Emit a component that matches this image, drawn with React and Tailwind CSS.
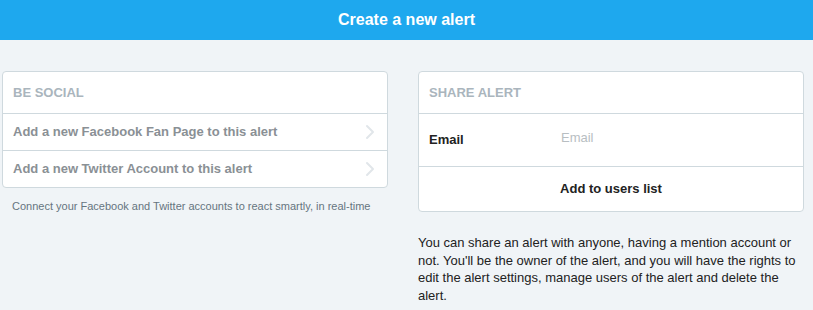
export default function App() {
  const font = { fontFamily: '"Liberation Sans", Arial, sans-serif' };
  return (
    <div className="min-h-[310px] w-full bg-[#f0f4f7]" style={font}>
      <div className="flex h-[40px] items-center justify-center bg-[#1ea8ee]">
        <h1 className="text-[16px] font-bold text-white">Create a new alert</h1>
      </div>
      <div className="grid grid-cols-2 gap-[30px] pl-[2px] pr-[9px] pt-[31px]">
        <div>
          <div className="rounded-[4px] border border-[#cfd9de] bg-white">
            <div className="flex h-[41px] items-center px-[10px] text-[13px] font-bold text-[#aab5bd]">
              BE SOCIAL
            </div>
            {["Add a new Facebook Fan Page to this alert", "Add a new Twitter Account to this alert"].map((t) => (
              <div key={t} className="flex h-[37px] items-center justify-between border-t border-[#cfd9de] pl-[10px] pr-[12px]">
                <span className="text-[13px] font-bold text-[#8a9095]">{t}</span>
                <svg width="10" height="16" viewBox="0 0 10 16" fill="none">
                  <path d="M2 2 L8 8 L2 14" stroke="#e1e6ea" strokeWidth="2" strokeLinecap="round" strokeLinejoin="round" />
                </svg>
              </div>
            ))}
          </div>
          <p className="mt-[10px] pl-[10px] text-[11px] text-[#66757f]">
            Connect your Facebook and Twitter accounts to react smartly, in real-time
          </p>
        </div>
        <div>
          <div className="rounded-[4px] border border-[#cfd9de] bg-white">
            <div className="flex h-[41px] items-center px-[10px] text-[13px] font-bold text-[#aab5bd]">
              SHARE ALERT
            </div>
            <div className="flex h-[53px] items-center border-t border-[#cfd9de] px-[10px]">
              <span className="w-[132px] text-[13px] font-bold text-[#222]">Email</span>
              <span className="-mt-[4px] text-[13px] text-[#b8bec2]">Email</span>
            </div>
            <div className="flex h-[45px] items-center justify-center border-t border-[#cfd9de]">
              <span className="text-[13px] font-bold text-[#222]">Add to users list</span>
            </div>
          </div>
          <p className="mt-[22px] text-[13px] leading-[17.7px] text-[#222]">
            You can share an alert with anyone, having a mention account or not. You'll be the owner of the alert, and you will have the rights to edit the alert settings, manage users of the alert and delete the alert.
          </p>
        </div>
      </div>
    </div>
  );
}
